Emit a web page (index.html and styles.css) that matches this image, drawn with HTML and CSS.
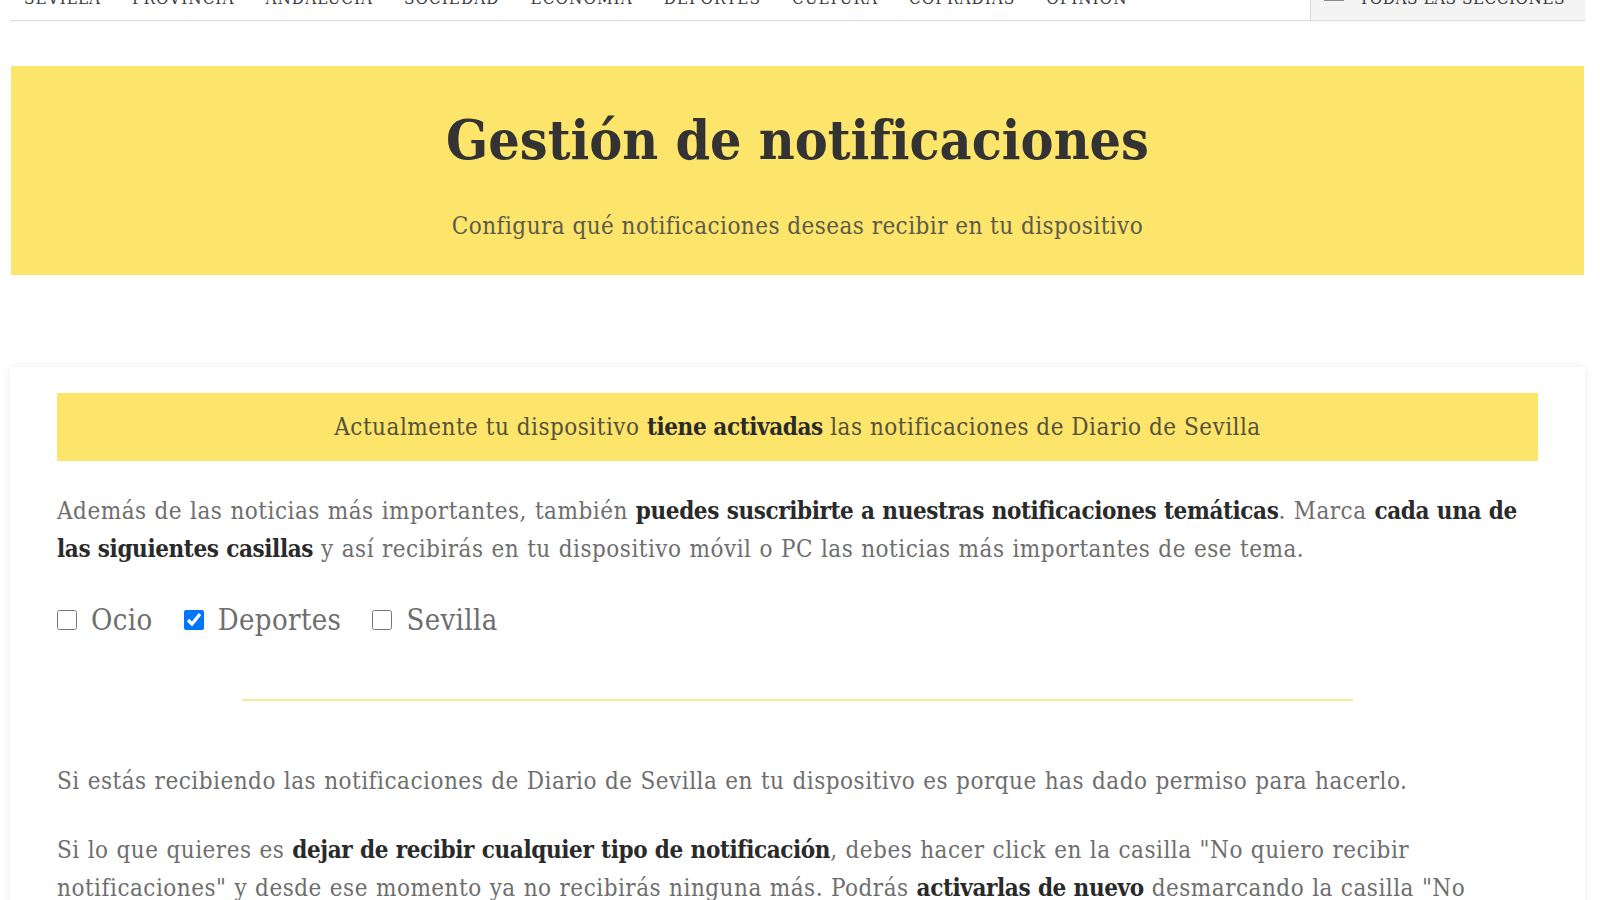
FILE: index.html
```html
<!DOCTYPE html>
<html lang="es">
<head>
<meta charset="utf-8">
<title>Gestión de notificaciones · Diario de Sevilla</title>
<link rel="stylesheet" href="styles.css">
</head>
<body>
<div class="page">
  <nav class="topbar">
    <ul class="menu">
      <li><a href="#">Sevilla</a></li>
      <li><a href="#">Provincia</a></li>
      <li><a href="#">Andalucía</a></li>
      <li><a href="#">Sociedad</a></li>
      <li><a href="#">Economía</a></li>
      <li><a href="#">Deportes</a></li>
      <li><a href="#">Cultura</a></li>
      <li><a href="#">Cofradías</a></li>
      <li><a href="#">Opinión</a></li>
    </ul>
    <button class="sections-btn" type="button">
      <svg class="burger" width="20" height="16" viewBox="0 0 20 16" aria-hidden="true">
        <rect x="0" y="1" width="20" height="2" fill="#8a8a8a"/>
        <rect x="0" y="7" width="20" height="2" fill="#8a8a8a"/>
        <rect x="0" y="13" width="20" height="2" fill="#8a8a8a"/>
      </svg>
      <span>Todas las secciones</span>
    </button>
  </nav>

  <header class="hero">
    <h1 class="hero-title">Gestión de notificaciones</h1>
    <p class="hero-sub">Configura qué notificaciones deseas recibir en tu dispositivo</p>
  </header>

  <main class="card">
    <div class="notice">Actualmente tu dispositivo <strong>tiene activadas</strong> las notificaciones de Diario de Sevilla</div>

    <p class="text">Además de las noticias más importantes, también <strong>puedes suscribirte a nuestras notificaciones temáticas</strong>. Marca <strong>cada una de las siguientes casillas</strong> y así recibirás en tu dispositivo móvil o PC las noticias más importantes de ese tema.</p>

    <div class="topics">
      <label class="topic"><input type="checkbox" name="ocio"> Ocio</label>
      <label class="topic"><input type="checkbox" name="deportes" checked> Deportes</label>
      <label class="topic"><input type="checkbox" name="sevilla"> Sevilla</label>
    </div>

    <hr class="divider">

    <p class="text">Si estás recibiendo las notificaciones de Diario de Sevilla en tu dispositivo es porque has dado permiso para hacerlo.</p>

    <p class="text">Si lo que quieres es <strong>dejar de recibir cualquier tipo de notificación</strong>, debes hacer click en la casilla "No quiero recibir notificaciones" y desde ese momento ya no recibirás ninguna más. Podrás <strong>activarlas de nuevo</strong> desmarcando la casilla "No quiero recibir notificaciones".</p>
  </main>
</div>
</body>
</html>
```

FILE: styles.css
```css
* {
  box-sizing: border-box;
}

html, body {
  margin: 0;
  padding: 0;
  background: #ffffff;
}

body {
  font-family: "DejaVu Serif Condensed", "DejaVu Serif", serif;
  font-stretch: condensed;
  color: #6e6e6e;
  overflow: hidden;
}

.page {
  width: 1600px;
  padding: 0 15px 0 10px;
}

/* ---- top navigation (scrolled partly out of view) ---- */
.topbar {
  display: flex;
  justify-content: space-between;
  height: 21px;
  border-bottom: 1px solid #dcdcdc;
  box-shadow: 0 1px 2px rgba(0, 0, 0, 0.04);
  overflow: hidden;
}

.menu {
  display: flex;
  gap: 31px;
  list-style: none;
  margin: -10px 0 0 14px;
  padding: 0;
}

.menu a {
  display: block;
  font-size: 17px;
  line-height: 16px;
  letter-spacing: 1px;
  text-transform: uppercase;
  color: #3a3a3a;
  text-decoration: none;
}

.sections-btn {
  display: flex;
  align-items: flex-start;
  gap: 15px;
  width: 275px;
  height: 20px;
  margin: 0;
  padding: 0 0 0 13px;
  border: 0;
  border-left: 1px solid #dadada;
  background: #f4f4f4;
  font-family: inherit;
  font-stretch: condensed;
  font-size: 17px;
  line-height: 16px;
  letter-spacing: 0.5px;
  text-transform: uppercase;
  color: #3a3a3a;
  overflow: hidden;
}

.sections-btn .burger {
  flex: none;
  margin-top: -14px;
}

.sections-btn span {
  margin-top: -10px;
  white-space: nowrap;
}

/* ---- yellow heading band ---- */
.hero {
  margin: 45px 1px 0 1px;
  padding: 40px 20px 32px;
  background: #fde46b;
  text-align: center;
}

.hero-title {
  margin: 0;
  font-size: 55px;
  line-height: 67px;
  font-weight: bold;
  color: #333333;
}

.hero-sub {
  margin: 36px 0 0;
  font-size: 24px;
  line-height: 34px;
  letter-spacing: 0.45px;
  color: #5b5b4a;
}

/* ---- content card ---- */
.card {
  margin-top: 92px;
  padding: 26px 47px 40px;
  background: #ffffff;
  box-shadow: 0 0 9px rgba(0, 0, 0, 0.07);
}

.notice {
  height: 68px;
  background: #fde46b;
  font-size: 24px;
  line-height: 68px;
  letter-spacing: 0.5px;
  text-align: center;
  color: #55523a;
}

.notice strong,
.text strong {
  color: #2a2a2a;
  letter-spacing: -0.4px;
}

.text {
  margin: 31px 0 0;
  font-size: 24px;
  line-height: 37px;
  letter-spacing: 0.5px;
  word-spacing: 0.6px;
}

.topics {
  display: flex;
  gap: 31px;
  margin-top: 32px;
}

.topic {
  display: flex;
  align-items: center;
  gap: 14px;
  height: 40px;
  font-size: 29px;
  letter-spacing: 0.4px;
  color: #6e6e6e;
}

.topic input {
  width: 20px;
  height: 20px;
  margin: 0;
}

.divider {
  width: 75%;
  height: 2px;
  margin: 59px auto 0;
  border: 0;
  background: #f1ea9e;
}

.divider + .text {
  margin-top: 62px;
}
```
